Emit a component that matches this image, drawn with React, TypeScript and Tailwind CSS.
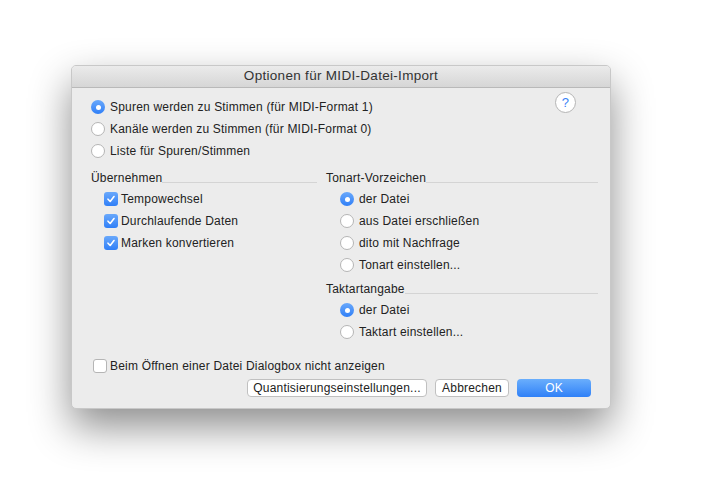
import React from "react";

const Radio = ({ on, label }: { on?: boolean; label: string }) => (
  <div className="flex items-center h-[22px]">
    {on ? (
      <span className="w-[14px] h-[14px] rounded-full bg-gradient-to-b from-[#69a8fb] to-[#2f7ff7] flex items-center justify-center">
        <span className="w-[5px] h-[5px] rounded-full bg-white" />
      </span>
    ) : (
      <span className="w-[14px] h-[14px] rounded-full bg-white border border-[#b5b5b5]" />
    )}
    <span className="ml-[5px]">{label}</span>
  </div>
);

const Check = ({ on, label }: { on?: boolean; label: string }) => (
  <div className="flex items-center h-[22px]">
    {on ? (
      <span className="w-[14px] h-[14px] rounded-[3px] bg-gradient-to-b from-[#69a8fb] to-[#2f7ff7] flex items-center justify-center">
        <svg width="10" height="10" viewBox="0 0 10 10"><path d="M2 5.2 L4.2 7.5 L8 2.5" stroke="white" strokeWidth="1.6" fill="none" strokeLinecap="round" strokeLinejoin="round" /></svg>
      </span>
    ) : (
      <span className="w-[14px] h-[14px] rounded-[3px] bg-white border border-[#b5b5b5]" />
    )}
    <span className="ml-[3px]">{label}</span>
  </div>
);

const Header = ({ label }: { label: string }) => (
  <div className="flex items-end h-[20px]">
    <span>{label}</span>
    <div className="flex-1 h-px bg-[#d4d4d4] mb-[4px]" />
  </div>
);

export default function App() {
  return (
    <div className="w-[715px] h-[503px] bg-white relative" style={{ fontFamily: '"Liberation Sans", Arial, sans-serif' }}>
      <div className="absolute left-[71px] top-[65px] w-[540px] h-[344px] bg-[#ececec] rounded-[5px] border border-[#c8c8c8] shadow-[0_18px_40px_rgba(0,0,0,0.45)] text-[12px] tracking-[0.2px] text-[#222] flex flex-col overflow-hidden">
        <div className="h-[22px] bg-gradient-to-b from-[#ebebeb] to-[#d6d6d6] border-b border-[#b9b9b9] flex items-center justify-center text-[13.5px] tracking-[0.3px] text-[#333]">
          Optionen für MIDI-Datei-Import
        </div>
        <div className="relative flex-1 px-[19px] pt-[8px]">
          <div className="absolute right-[34px] top-[4px] w-[21px] h-[21px] rounded-full bg-white border border-[#b5b5b5] flex items-center justify-center text-[13px] text-[#3b82f6]">?</div>
          <Radio on label="Spuren werden zu Stimmen (für MIDI-Format 1)" />
          <Radio label="Kanäle werden zu Stimmen (für MIDI-Format 0)" />
          <Radio label="Liste für Spuren/Stimmen" />
          <div className="flex mt-[5px]">
            <div className="w-[226px] mr-[9px]">
              <Header label="Übernehmen" />
              <div className="pl-[13px] pt-[1px]">
                <Check on label="Tempowechsel" />
                <Check on label="Durchlaufende Daten" />
                <Check on label="Marken konvertieren" />
              </div>
            </div>
            <div className="flex-1 mr-[-7px]">
              <Header label="Tonart-Vorzeichen" />
              <div className="pl-[14px] pt-[1px]">
                <Radio on label="der Datei" />
                <Radio label="aus Datei erschließen" />
                <Radio label="dito mit Nachfrage" />
                <Radio label="Tonart einstellen..." />
              </div>
              <div className="mt-[2px]"><Header label="Taktartangabe" /></div>
              <div className="pl-[14px] pt-[1px]">
                <Radio on label="der Datei" />
                <Radio label="Taktart einstellen..." />
              </div>
            </div>
          </div>
          <div className="mt-[12px] ml-[2px]"><Check label="Beim Öffnen einer Datei Dialogbox nicht anzeigen" /></div>
          <div className="flex justify-end gap-[8px] mt-[2px]">
            <button className="w-[180px] h-[18px] bg-white border border-[#c0c0c0] rounded-[4px] text-[12px] leading-none">Quantisierungseinstellungen...</button>
            <button className="w-[74px] h-[18px] bg-white border border-[#c0c0c0] rounded-[4px] text-[12px] leading-none">Abbrechen</button>
            <button className="w-[74px] h-[18px] bg-gradient-to-b from-[#6aaefc] to-[#2f80f7] rounded-[4px] text-[12px] leading-none text-white">OK</button>
          </div>
        </div>
      </div>
    </div>
  );
}
